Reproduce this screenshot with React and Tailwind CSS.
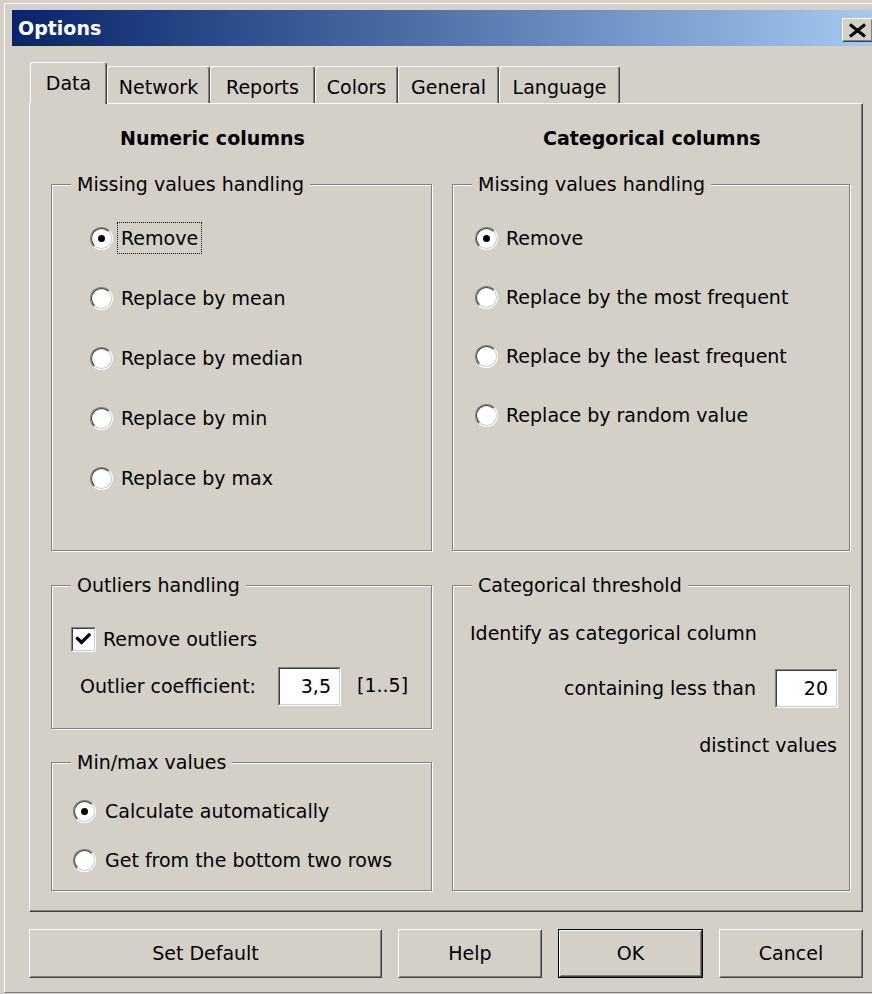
import React from "react";

// Classic 3D edge styles used throughout the dialog
const raisedOuter =
  "border border-t-white border-l-white border-b-[#404040] border-r-[#404040]";
const raisedInner =
  "border border-t-[#d4d0c8] border-l-[#d4d0c8] border-b-[#808080] border-r-[#808080]";
const sunkenOuter =
  "border border-t-[#808080] border-l-[#808080] border-b-white border-r-white";
const sunkenInner =
  "border border-t-[#404040] border-l-[#404040] border-b-[#d4d0c8] border-r-[#d4d0c8]";

function RadioDot({ checked }) {
  return (
    <span className={`block shrink-0 w-[23px] h-[23px] rounded-full ${sunkenOuter}`}>
      <span
        className={`flex w-full h-full items-center justify-center rounded-full bg-white ${sunkenInner}`}
      >
        {checked ? <span className="block w-[7px] h-[7px] rounded-full bg-black" /> : null}
      </span>
    </span>
  );
}

function RadioRow({ label, checked, focused, gapClass }) {
  return (
    <div className={`flex h-[32px] items-center ${gapClass}`}>
      <RadioDot checked={checked} />
      <span
        className={`h-[32px] px-[3px] leading-[30px] whitespace-nowrap border ${
          focused ? "border-dotted border-black" : "border-transparent"
        }`}
      >
        {label}
      </span>
    </div>
  );
}

function CheckBox() {
  return (
    <span className={`block shrink-0 w-[25px] h-[25px] ${sunkenOuter}`}>
      <span className={`flex w-full h-full items-center justify-center bg-white ${sunkenInner}`}>
        <svg width="21" height="21" viewBox="0 0 21 21">
          <path d="M4.5 9.5 L8.5 13.5 L16 6" fill="none" stroke="#000" strokeWidth="3.2" strokeLinecap="square" />
        </svg>
      </span>
    </span>
  );
}

function TextBox({ value, width }) {
  return (
    <div className={`shrink-0 ${width} h-[39px] bg-white ${sunkenOuter}`}>
      <div className={`h-full flex items-center justify-end pr-[8px] ${sunkenInner}`}>{value}</div>
    </div>
  );
}

function Group({ label, heightClass, className = "", children }) {
  return (
    <div
      className={`relative ${heightClass} border border-[#808080] shadow-[inset_1px_1px_0_#ffffff,1px_1px_0_#ffffff] ${className}`}
    >
      <span className="absolute left-[19px] top-[-12px] px-[6px] bg-[#d4d0c8] leading-[22px] whitespace-nowrap">
        {label}
      </span>
      {children}
    </div>
  );
}

function Tab({ label, selected, widthClass }) {
  if (selected) {
    return (
      <div
        className={`relative z-10 ${widthClass} h-[42px] -mb-px rounded-t-[3px] bg-[#d4d0c8] border-t border-l border-r border-t-white border-l-white border-r-[#404040] shadow-[inset_-1px_0_0_#808080] pt-[9px] text-center leading-[22px]`}
      >
        {label}
      </div>
    );
  }
  return (
    <div
      className={`${widthClass} h-[37px] rounded-t-[3px] border-t border-l border-r border-t-white border-l-white border-r-[#404040] shadow-[inset_-1px_0_0_#808080] pt-[9px] text-center leading-[22px]`}
    >
      {label}
    </div>
  );
}

function Button({ label, widthClass, isDefault }) {
  if (isDefault) {
    return (
      <div className={`${widthClass} h-[49px] border border-black`}>
        <div className={`h-full ${raisedOuter}`}>
          <div className={`h-full flex items-center justify-center ${raisedInner}`}>{label}</div>
        </div>
      </div>
    );
  }
  return (
    <div className={`${widthClass} h-[49px] ${raisedOuter}`}>
      <div className={`h-full flex items-center justify-center ${raisedInner}`}>{label}</div>
    </div>
  );
}

export default function App() {
  return (
    <div className="w-[872px] h-[994px] overflow-hidden bg-[#d4d0c8] font-['DejaVu_Sans',sans-serif] text-[19px] text-black">
      <div className="pt-[3px] pl-[4px]">
        <div className="w-[900px] h-[990px] border-t border-l border-b border-t-white border-l-white border-b-[#808080] pt-[6px] pl-[7px]">
          {/* Title bar */}
          <div className="w-[866px] h-[36px] flex items-start bg-linear-to-r from-[#0a246a] to-[#a6caf0]">
            <div className="pl-[6px] h-[36px] leading-[36px] font-bold text-white">Options</div>
            <div className={`ml-auto mr-[5px] mt-[8px] w-[31px] h-[24px] bg-[#d4d0c8] ${raisedOuter}`}>
              <div className={`h-full flex items-center justify-center ${raisedInner}`}>
                <svg width="19" height="15" viewBox="0 0 19 15">
                  <path d="M2 1.5 L17 13.5 M17 1.5 L2 13.5" stroke="#000" strokeWidth="3" />
                </svg>
              </div>
            </div>
          </div>

          <div className="pl-[17px]">
            {/* Tab strip */}
            <div className="mt-[16px] h-[41px] pl-px flex items-end">
              <Tab label="Data" selected widthClass="w-[77px]" />
              <Tab label="Network" widthClass="w-[103px]" />
              <Tab label="Reports" widthClass="w-[105px]" />
              <Tab label="Colors" widthClass="w-[83px]" />
              <Tab label="General" widthClass="w-[101px]" />
              <Tab label="Language" widthClass="w-[121px]" />
            </div>

            {/* Tab page */}
            <div className="w-[834px] h-[809px] border border-t-white border-l-white border-b-[#404040] border-r-[#404040] shadow-[inset_-1px_-1px_0_#808080] pl-[21px] pt-[20px]">
              <div className="grid grid-cols-[381px_398px] gap-x-[20px]">
                <div className="h-[28px] leading-[28px] font-bold pl-[69px] whitespace-nowrap">Numeric columns</div>
                <div className="h-[28px] leading-[28px] font-bold pl-[91px] whitespace-nowrap">Categorical columns</div>

                {/* Numeric column settings */}
                <div className="mt-[32px] flex flex-col">
                  <Group label="Missing values handling" heightClass="h-[367px]">
                    <div className="pt-[37px] pl-[38px] flex flex-col gap-[28px]">
                      <RadioRow label="Remove" checked focused gapClass="gap-[4px]" />
                      <RadioRow label="Replace by mean" gapClass="gap-[4px]" />
                      <RadioRow label="Replace by median" gapClass="gap-[4px]" />
                      <RadioRow label="Replace by min" gapClass="gap-[4px]" />
                      <RadioRow label="Replace by max" gapClass="gap-[4px]" />
                    </div>
                  </Group>

                  <Group label="Outliers handling" heightClass="h-[144px]" className="mt-[34px]">
                    <div className="pt-[41px] flex flex-col">
                      <div className="h-[25px] pl-[19px] flex items-center gap-[7px]">
                        <CheckBox />
                        <span className="whitespace-nowrap">Remove outliers</span>
                      </div>
                      <div className="mt-[15px] h-[39px] pl-[28px] flex items-center">
                        <span className="w-[198px] shrink-0 whitespace-nowrap">Outlier coefficient:</span>
                        <TextBox value="3,5" width="w-[63px]" />
                        <span className="ml-[16px] -mt-[3px] whitespace-nowrap">[1..5]</span>
                      </div>
                    </div>
                  </Group>

                  <Group label="Min/max values" heightClass="h-[129px]" className="mt-[33px]">
                    <div className="pt-[32px] pl-[21px] flex flex-col gap-[17px]">
                      <RadioRow label="Calculate automatically" checked gapClass="gap-[5px]" />
                      <RadioRow label="Get from the bottom two rows" gapClass="gap-[5px]" />
                    </div>
                  </Group>
                </div>

                {/* Categorical column settings */}
                <div className="mt-[32px] flex flex-col">
                  <Group label="Missing values handling" heightClass="h-[367px]">
                    <div className="pt-[37px] pl-[22px] flex flex-col gap-[27px]">
                      <RadioRow label="Remove" checked gapClass="gap-[4px]" />
                      <RadioRow label="Replace by the most frequent" gapClass="gap-[4px]" />
                      <RadioRow label="Replace by the least frequent" gapClass="gap-[4px]" />
                      <RadioRow label="Replace by random value" gapClass="gap-[4px]" />
                    </div>
                  </Group>

                  <Group label="Categorical threshold" heightClass="h-[306px]" className="mt-[34px]">
                    <div className="pt-[34px] flex flex-col">
                      <div className="h-[26px] leading-[26px] pl-[17px] whitespace-nowrap">
                        Identify as categorical column
                      </div>
                      <div className="mt-[22px] h-[40px] pr-[11px] flex items-center justify-end">
                        <span className="whitespace-nowrap">containing less than</span>
                        <div className="ml-[19px]">
                          <TextBox value="20" width="w-[63px]" />
                        </div>
                      </div>
                      <div className="mt-[24px] h-[26px] leading-[26px] pr-[12px] text-right whitespace-nowrap">
                        distinct values
                      </div>
                    </div>
                  </Group>
                </div>
              </div>
            </div>

            {/* Dialog buttons */}
            <div className="mt-[17px] flex gap-[16px]">
              <Button label="Set Default" widthClass="w-[353px]" />
              <Button label="Help" widthClass="w-[144px]" />
              <Button label="OK" widthClass="w-[145px]" isDefault />
              <Button label="Cancel" widthClass="w-[144px]" />
            </div>
          </div>
        </div>
      </div>
    </div>
  );
}
